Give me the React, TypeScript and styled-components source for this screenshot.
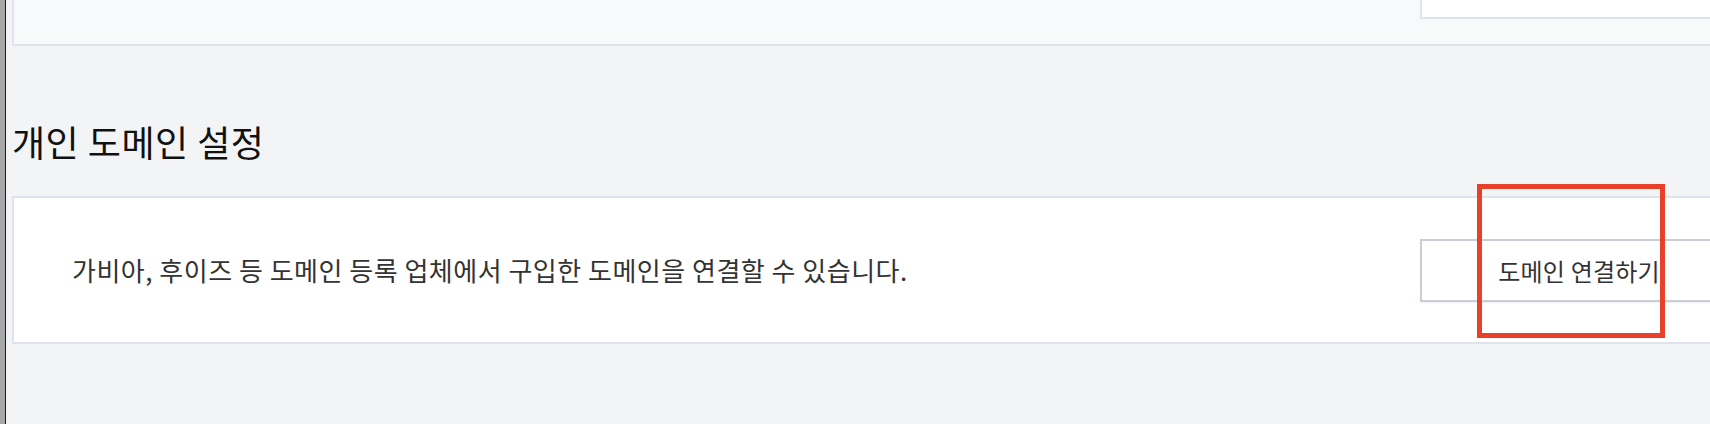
import React from "react";
import styled, { createGlobalStyle } from "styled-components";

const GlobalStyle = createGlobalStyle`
  html, body {
    margin: 0;
    padding: 0;
    width: 1710px;
    height: 424px;
    overflow: hidden;
    background: #f3f4f6;
    font-family: "Noto Sans CJK KR", "Noto Sans", sans-serif;
  }
`;

const Page = styled.div`
  display: flex;
  width: 1710px;
  height: 424px;
  overflow: hidden;
  position: relative;
`;

const SideEdge = styled.div`
  flex: 0 0 5px;
  background: #a8a8a8;
  border-right: 1px solid #1a1a1a;
`;

const Main = styled.main`
  flex: 1;
  min-width: 0;
  background: #f3f4f6;
  padding-left: 6px;
  display: flex;
  flex-direction: column;
  overflow: hidden;
`;

const TopPanel = styled.section`
  background: #f8f9fb;
  border: 2px solid #dfe4ec;
  border-top: none;
  border-right: none;
  margin-right: -40px;
  padding: 0 0 25px 1406px;
  display: flex;
`;

const TopInput = styled.div`
  width: 340px;
  height: 17px;
  background: #ffffff;
  border: 2px solid #dfe4ec;
  border-top: none;
  border-right: none;
`;

const Heading = styled.h2`
  margin: 69px 0 0 0;
  font-size: 36px;
  font-weight: 400;
  letter-spacing: 0.5px;
  line-height: 52px;
  color: #111111;
  height: 81px;
`;

const Card = styled.section`
  background: #ffffff;
  border: 2px solid #dfe4ec;
  border-right: none;
  margin-right: -40px;
  height: 144px;
  display: flex;
  align-items: center;
  padding-left: 58px;
  padding-right: 12px;
`;

const Description = styled.p`
  margin: 1px 0 0 0;
  flex: 1;
  font-size: 26px;
  letter-spacing: 0.5px;
  color: #333333;
  line-height: 1.4;
`;

const ConnectButton = styled.button`
  width: 318px;
  height: 63px;
  background: #ffffff;
  border: 2px solid #c9ced8;
  font-family: inherit;
  font-size: 24px;
  letter-spacing: 0.2px;
  color: #333333;
  padding: 0;
  cursor: pointer;
  box-shadow: 0 1px 1px rgba(0, 0, 0, 0.05);
`;

const Highlight = styled.div`
  position: absolute;
  left: 1477px;
  top: 184px;
  width: 178px;
  height: 144px;
  border: 5px solid #e8412a;
  pointer-events: none;
`;

export default function App() {
  return (
    <>
      <GlobalStyle />
      <Page>
        <SideEdge />
        <Main>
          <TopPanel>
            <TopInput />
          </TopPanel>
          <Heading>개인 도메인 설정</Heading>
          <Card>
            <Description>
              가비아, 후이즈 등 도메인 등록 업체에서 구입한 도메인을 연결할 수 있습니다.
            </Description>
            <ConnectButton>도메인 연결하기</ConnectButton>
          </Card>
        </Main>
        <Highlight />
      </Page>
    </>
  );
}
